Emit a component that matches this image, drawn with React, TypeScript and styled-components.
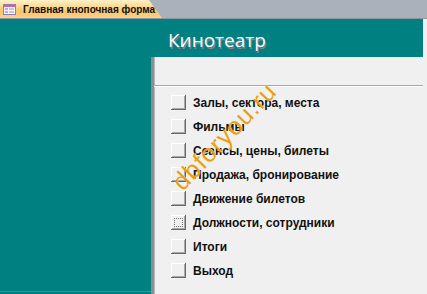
import React from 'react';
import styled, { createGlobalStyle } from 'styled-components';

const GlobalStyle = createGlobalStyle`
    html, body {
        margin: 0;
        padding: 0;
        background: #f0f0f0;
    }
`;

const Window = styled.div`
    position: relative;
    width: 427px;
    height: 294px;
    overflow: hidden;
    display: flex;
    flex-direction: column;
    background: #f0f0f0;
    font-family: 'Liberation Sans', Arial, sans-serif;
`;

const TabBar = styled.div`
    height: 19px;
    flex-shrink: 0;
    display: flex;
    background: #abb1bb;
    border-bottom: 1px solid #8f96a0;
    box-sizing: border-box;
`;

const Tab = styled.div`
    width: 162px;
    height: 18px;
    display: flex;
    align-items: center;
    gap: 7px;
    padding-left: 3px;
    box-sizing: border-box;
    clip-path: polygon(0 0, 149px 0, 162px 100%, 0 100%);
    background: linear-gradient(180deg, #fff1c9 0%, #fddb95 35%, #fbc46c 65%, #fbd18a 100%);
`;

const TabTitle = styled.span`
    font-size: 10px;
    font-weight: bold;
    color: #111;
    white-space: nowrap;
`;

const Body = styled.div`
    flex: 1;
    display: flex;
`;

const Sidebar = styled.div`
    width: 151px;
    flex-shrink: 0;
    background: #008080;
    box-shadow: inset 0 -2px 0 #008080, inset 0 -3px 0 #2a9a9a;
`;

const Main = styled.div`
    width: 272px;
    display: flex;
    flex-direction: column;
`;

const Header = styled.div`
    height: 38px;
    flex-shrink: 0;
    background: #008080;
    padding-left: 17px;
    box-sizing: border-box;
    display: flex;
    align-items: flex-end;
`;

const Title = styled.h1`
    margin: 0 0 6px;
    font-family: 'Open Sans', 'Liberation Sans', sans-serif;
    font-size: 19px;
    font-weight: normal;
    line-height: 22px;
    color: #ffffff;
    text-shadow: 1px 2px 0 #8a7f86;
`;

const Panel = styled.div`
    flex: 1;
    display: flex;
    flex-direction: column;
    border-left: 3px solid #8e8e8e;
    box-shadow: inset 1px 0 0 #b8b8b8;
    background: #f0f0f0;
`;

const PanelTop = styled.div`
    height: 28px;
    flex-shrink: 0;
    border-bottom: 1px solid #a9a9a9;
    box-shadow: 0 1px 0 #ffffff;
`;

const Menu = styled.ul`
    list-style: none;
    margin: 0;
    padding: 9px 0 0 17px;
`;

const MenuRow = styled.li`
    height: 24px;
    display: flex;
    align-items: flex-start;
    gap: 7px;
`;

const SquareButton = styled.button<{ $focused?: boolean }>`
    width: 15px;
    height: 15px;
    padding: 0;
    margin: 0;
    border: none;
    flex-shrink: 0;
    background: #f0f0f0;
    box-shadow:
        inset -1px -1px 0 #6a6a6a,
        inset 1px 1px 0 #ffffff,
        inset -2px -2px 0 #a8a8a8;
    outline: ${p => (p.$focused ? '1px dotted #777' : 'none')};
    outline-offset: -4px;
`;

const MenuLabel = styled.span`
    font-size: 12px;
    font-weight: bold;
    line-height: 14px;
    color: #111;
    padding-top: 1px;
    white-space: nowrap;
`;

const Filler = styled.div`
    flex: 1;
`;

const Watermark = styled.div`
    position: absolute;
    left: 149px;
    top: 122px;
    width: 150px;
    text-align: center;
    font-family: 'Liberation Sans', Arial, sans-serif;
    font-size: 25px;
    letter-spacing: 1px;
    line-height: 28px;
    color: #e8a010;
    text-shadow: 0 0 1px rgba(255, 255, 255, 0.6);
    transform: rotate(-46deg);
    pointer-events: none;
    white-space: nowrap;
`;

const FormIcon = () => (
    <svg width="13" height="11" viewBox="0 0 13 11">
        <rect x="0.5" y="0.5" width="12" height="10" fill="#f6f4fb" stroke="#8c7fb3" />
        <rect x="1" y="1" width="11" height="2" fill="#d9628c" />
        <rect x="2" y="4.5" width="3" height="1" fill="#7b6fa8" />
        <rect x="6" y="4" width="5" height="2" fill="#c9c2e2" />
        <rect x="2" y="7.5" width="3" height="1" fill="#7b6fa8" />
        <rect x="6" y="7" width="5" height="2" fill="#c9c2e2" />
    </svg>
);

const items = [
    'Залы, сектора, места',
    'Фильмы',
    'Сеансы, цены, билеты',
    'Продажа, бронирование',
    'Движение билетов',
    'Должности, сотрудники',
    'Итоги',
    'Выход',
];

const App = () => (
    <>
        <GlobalStyle />
        <Window>
            <TabBar>
                <Tab>
                    <FormIcon />
                    <TabTitle>Главная кнопочная форма</TabTitle>
                </Tab>
            </TabBar>
            <Body>
                <Sidebar />
                <Main>
                    <Header>
                        <Title>Кинотеатр</Title>
                    </Header>
                    <Panel>
                        <PanelTop />
                        <Menu>
                            {items.map((label, i) => (
                                <MenuRow key={label}>
                                    <SquareButton $focused={i === 5} />
                                    <MenuLabel>{label}</MenuLabel>
                                </MenuRow>
                            ))}
                        </Menu>
                    </Panel>
                </Main>
                <Filler />
            </Body>
            <Watermark>dbforyou.ru</Watermark>
        </Window>
    </>
);

export default App;
